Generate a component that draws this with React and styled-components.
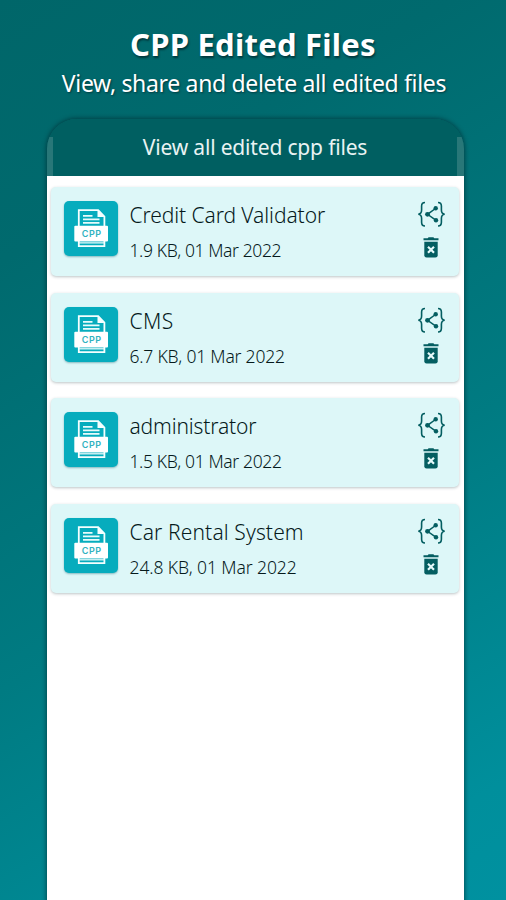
import React from "react";
import styled, { createGlobalStyle } from "styled-components";

const GlobalStyle = createGlobalStyle`
  *, *::before, *::after { box-sizing: border-box; }
  html, body { margin: 0; height: 100%; overflow: hidden; }
`;

const Page = styled.main`
  width: 506px;
  height: 900px;
  overflow: hidden;
  display: flex;
  flex-direction: column;
  align-items: center;
  background: linear-gradient(150deg, #006669 0%, #006a6e 22%, #007b82 58%, #008f9c 90%, #0091a0 100%);
  font-family: "Noto Sans", "Open Sans", sans-serif;
`;

const Hero = styled.header`
  height: 119px;
  padding-top: 24px;
  flex-shrink: 0;
  display: flex;
  flex-direction: column;
  align-items: center;
  color: #fff;
  white-space: nowrap;
`;

const Heading = styled.h1`
  margin: 0;
  font-size: 31px;
  line-height: 40px;
  font-weight: 700;
  letter-spacing: 0.25px;
  text-shadow: 1px 2px 2px rgba(0, 30, 35, 0.65);
`;

const Subheading = styled.p`
  margin: 0 0 0 2px;
  font-size: 23px;
  line-height: 38px;
  letter-spacing: -0.33px;
  text-shadow: 1px 1px 2px rgba(0, 30, 35, 0.6);
`;

const Screen = styled.section`
  width: 417px;
  height: 800px;
  flex-shrink: 0;
  margin-left: 4px;
  border-radius: 30px 30px 0 0;
  background: linear-gradient(#005f61 57px, #fff 57px);
  box-shadow: 0 0 4px 1px rgba(0, 45, 50, 0.65);
  overflow: hidden;
`;

const TitleBar = styled.div`
  height: 57px;
  padding-bottom: 1px;
  display: flex;
  align-items: center;
  justify-content: center;
  color: #e9f3f3;
  font-size: 21px;
  letter-spacing: -0.17px;
  white-space: nowrap;
  background:
    linear-gradient(#287778, #287778) 0 18px / 6px 39px no-repeat,
    linear-gradient(#287778, #287778) 100% 18px / 7px 39px no-repeat,
    #005f61;
`;

const FileList = styled.ul`
  list-style: none;
  margin: 0;
  padding: 11px 5px 0 4px;
  display: flex;
  flex-direction: column;
  gap: 16.7px;
`;

const Card = styled.li`
  height: 89px;
  padding: 14px 13px 0 13px;
  border-radius: 5px;
  display: flex;
  background: #ddf7f8;
  box-shadow: 0 1px 3px rgba(50, 75, 80, 0.32);
`;

const FileTile = styled.div`
  width: 54px;
  height: 55px;
  border-radius: 5px;
  flex-shrink: 0;
  background: #06acbd;
  box-shadow: 0 1px 2px rgba(0, 95, 110, 0.4);

  svg { display: block; }
`;

const Details = styled.div`
  margin: -1px 0 0 12px;
  flex: 1;
  color: #061a1c;
  font-weight: 300;
  white-space: nowrap;
`;

const FileName = styled.div`
  font-size: 21px;
  line-height: 30px;
  letter-spacing: ${(p) => p.$tracking}px;
`;

const FileMeta = styled.div`
  margin-top: 5px;
  font-size: 17.5px;
  line-height: 30px;
  letter-spacing: ${(p) => p.$tracking}px;
`;

const Actions = styled.div`
  width: 29px;
  display: flex;
  flex-direction: column;
  align-items: center;
  gap: 9px;
`;

const ActionButton = styled.button`
  padding: 0;
  border: 0;
  background: none;
  display: block;
  color: #045e61;

  svg { display: block; }
`;

const CppLabel = styled.text`
  font: 600 9px "Inter", sans-serif;
  fill: #2fb2bf;
`;

const CppIcon = () => (
  <svg width="54" height="55" viewBox="0 0 54 55" fill="none">
    <path d="M14.8 26V9.2H34.2L40.4 15.6V26M14.8 39V45.2H40.4V39" stroke="#f5ffff" strokeWidth="1.8" />
    <path d="M33.5 9V16H40.5Z" fill="#f5ffff" />
    <path d="M19 14.8H28.5M19 18.3H35.5M19 21.8H35.5" stroke="#e8fbfb" strokeWidth="1.7" />
    <path d="M15 41.8H40" stroke="#e8fbfb" strokeWidth="1.3" />
    <rect x="10.3" y="24.8" width="33.7" height="15.7" rx="1" fill="#fff" />
    <CppLabel x="27.4" y="35.8" textAnchor="middle" textLength="19.5">CPP</CppLabel>
  </svg>
);

const ShareIcon = () => (
  <svg width="29" height="27" viewBox="0 0 29 27" fill="none" stroke="currentColor">
    <path d="M8 1.5C5 1.5 4.6 3 4.6 5V9C4.6 11.8 3.7 13 1.3 13.2C3.7 13.4 4.6 14.6 4.6 17.4V21.3C4.6 23.5 5 25 8 25" strokeWidth="1.6" />
    <path d="M21 1.5C24 1.5 24.4 3 24.4 5V9C24.4 11.8 25.3 13 27.7 13.2C25.3 13.4 24.4 14.6 24.4 17.4V21.3C24.4 23.5 24 25 21 25" strokeWidth="1.6" />
    <path d="M18.5 7.5L10.5 13.3L18.8 19.2" strokeWidth="1.5" />
    <g fill="currentColor" stroke="none">
      <circle cx="18.7" cy="7.3" r="2.2" />
      <circle cx="10.5" cy="13.3" r="2.4" />
      <circle cx="19" cy="19.3" r="2.2" />
    </g>
  </svg>
);

const TrashIcon = () => (
  <svg width="16" height="21" viewBox="0 0 16 21" fill="currentColor">
    <path d="M4.7 1.2 5.6.3H10.4L11.3 1.2H15.5V3.3H.5V1.2Z" />
    <path d="M1.3 4.8H14.7V18.2Q14.7 20.5 12.4 20.5H3.6Q1.3 20.5 1.3 18.2Z" />
    <path d="M5 9.7 11 15.7M11 9.7 5 15.7" stroke="#e5f9fa" strokeWidth="2.2" />
  </svg>
);

const files = [
  { name: "Credit Card Validator", meta: "1.9 KB, 01 Mar 2022", nameTracking: -0.08, metaTracking: -0.39 },
  { name: "CMS", meta: "6.7 KB, 01 Mar 2022", nameTracking: 0.4, metaTracking: -0.2 },
  { name: "administrator", meta: "1.5 KB, 01 Mar 2022", nameTracking: -0.15, metaTracking: -0.37 },
  { name: "Car Rental System", meta: "24.8 KB, 01 Mar 2022", nameTracking: 0.12, metaTracking: -0.1 },
];

export default function App() {
  return (
    <>
      <GlobalStyle />
      <Page>
        <Hero>
          <Heading>CPP Edited Files</Heading>
          <Subheading>View, share and delete all edited files</Subheading>
        </Hero>
        <Screen>
          <TitleBar>View all edited cpp files</TitleBar>
          <FileList>
            {files.map((file) => (
              <Card key={file.name}>
                <FileTile><CppIcon /></FileTile>
                <Details>
                  <FileName $tracking={file.nameTracking}>{file.name}</FileName>
                  <FileMeta $tracking={file.metaTracking}>{file.meta}</FileMeta>
                </Details>
                <Actions>
                  <ActionButton aria-label={`Share ${file.name}`}><ShareIcon /></ActionButton>
                  <ActionButton aria-label={`Delete ${file.name}`}><TrashIcon /></ActionButton>
                </Actions>
              </Card>
            ))}
          </FileList>
        </Screen>
      </Page>
    </>
  );
}
